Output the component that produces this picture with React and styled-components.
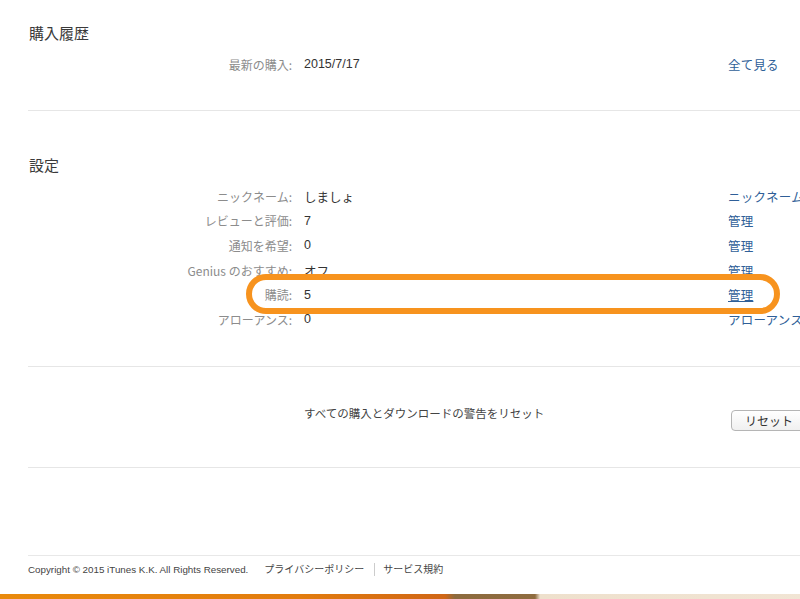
import React from "react";
import styled, { createGlobalStyle } from "styled-components";

const GlobalStyle = createGlobalStyle`
  html, body {
    margin: 0;
    padding: 0;
    background: #fff;
    overflow: hidden;
  }
  body {
    font-family: "Noto Sans CJK JP", "Liberation Sans", sans-serif;
    color: #333;
  }
`;

const Page = styled.div`
  position: relative;
  width: 1000px;
  height: 599px;
  display: flex;
  flex-direction: column;
`;

const Main = styled.main`
  flex: 1;
  padding-left: 28px;
`;

const Section = styled.section`
  padding-top: ${(p) => p.top}px;
  padding-bottom: ${(p) => p.bottom}px;
  border-bottom: 1px solid #e6e6e6;
`;

const Heading = styled.h2`
  margin: 0 0 ${(p) => p.gap}px 1px;
  font-size: 15px;
  font-weight: normal;
  line-height: 20px;
  color: #3a3a3a;
`;

const Row = styled.div`
  display: grid;
  grid-template-columns: 264px 412px auto;
  column-gap: 12px;
  align-items: center;
  height: ${(p) => p.h || 24.6}px;
  font-size: 12px;
  white-space: nowrap;
`;

const Label = styled.span`
  text-align: right;
  color: #8c8c8c;
`;

const Value = styled.span`
  color: #333;
  font-size: 12.5px;
  font-family: "Liberation Sans", "Noto Sans CJK JP", sans-serif;
`;

const Action = styled.a`
  color: #2f5f98;
  font-size: 12.5px;
  letter-spacing: 0.2px;
  text-decoration: ${(p) => (p.hover ? "underline" : "none")};
  cursor: pointer;
`;

const ResetRow = styled.div`
  display: grid;
  grid-template-columns: 276px 427px auto;
  align-items: start;
  height: 62px;
  font-size: 11.5px;
  color: #444;
  white-space: nowrap;
`;

const ResetText = styled.span`
  grid-column: 2;
  line-height: 16px;
`;

const ResetButton = styled.button`
  grid-column: 3;
  margin-top: 5px;
  width: 90px;
  height: 21px;
  padding: 0 0 0 13px;
  text-align: left;
  font-family: inherit;
  font-size: 12px;
  color: #333;
  background: linear-gradient(#ffffff, #f0f0f0);
  border: 1px solid #b5b5b5;
  border-radius: 4px;
`;

const Footer = styled.footer`
  margin-left: 28px;
  border-top: 1px solid #e8e8e8;
  height: 39px;
  display: flex;
  align-items: flex-start;
  padding-top: 7px;
  box-sizing: border-box;
  font-family: "Liberation Sans", "Noto Sans CJK JP", sans-serif;
  font-size: 9.8px;
  line-height: 13px;
  color: #444;
  white-space: nowrap;
`;

const FooterLink = styled.a`
  color: #444;
  font-size: 10px;
  padding: ${(p) => (p.first ? "0 10px 0 16px" : "0 0 0 8px")};
  border-left: ${(p) => (p.first ? "none" : "1px solid #ccc")};
`;

const BottomBar = styled.div`
  height: 5px;
  background: linear-gradient(
    to right,
    #e98a0c 0%,
    #e27c0e 30%,
    #d06616 44.5%,
    #8d6b3e 45.5%,
    #8f6c3f 53.5%,
    #eee0cc 54%,
    #f3e8da 100%
  );
`;

const Highlight = styled.div`
  position: absolute;
  left: 246px;
  top: 274px;
  width: 534px;
  height: 40px;
  box-sizing: border-box;
  border: 6px solid #f7931e;
  border-radius: 20px;
  pointer-events: none;
`;

const settings = [
  { label: "ニックネーム:", value: "しましょ", action: "ニックネームを編集" },
  { label: "レビューと評価:", value: "7", action: "管理" },
  { label: "通知を希望:", value: "0", action: "管理" },
  { label: "Genius のおすすめ:", value: "オフ", action: "管理" },
  { label: "購読:", value: "5", action: "管理", hover: true },
  { label: "アローアンス:", value: "0", action: "アローアンスを管理" },
];

export default function App() {
  return (
    <Page>
      <GlobalStyle />
      <Main>
        <Section top={23} bottom={34}>
          <Heading gap={9}>購入履歴</Heading>
          <Row h={24}>
            <Label>最新の購入:</Label>
            <Value>2015/7/17</Value>
            <Action>全て見る</Action>
          </Row>
        </Section>
        <Section top={44} bottom={34}>
          <Heading gap={9}>設定</Heading>
          {settings.map((s) => (
            <Row key={s.label}>
              <Label>{s.label}</Label>
              <Value>{s.value}</Value>
              <Action hover={s.hover}>{s.action}</Action>
            </Row>
          ))}
        </Section>
        <Section top={38} bottom={0}>
          <ResetRow>
            <ResetText>すべての購入とダウンロードの警告をリセット</ResetText>
            <ResetButton>リセット</ResetButton>
          </ResetRow>
        </Section>
      </Main>
      <Footer>
        Copyright © 2015 iTunes K.K. All Rights Reserved.
        <FooterLink first>プライバシーポリシー</FooterLink>
        <FooterLink>サービス規約</FooterLink>
      </Footer>
      <BottomBar />
      <Highlight />
    </Page>
  );
}
